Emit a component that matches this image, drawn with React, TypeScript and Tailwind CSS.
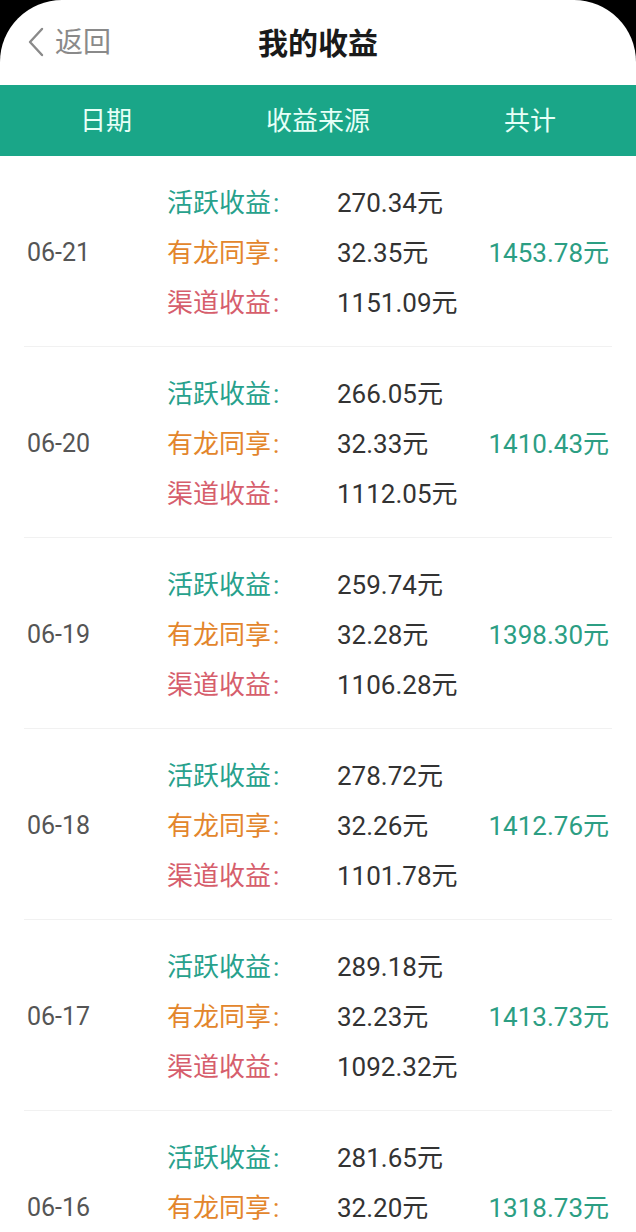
import React from "react";

type Row = { date: string; a: string; b: string; c?: string; total: string };

const rows: Row[] = [
  { date: "06-21", a: "270.34元", b: "32.35元", c: "1151.09元", total: "1453.78元" },
  { date: "06-20", a: "266.05元", b: "32.33元", c: "1112.05元", total: "1410.43元" },
  { date: "06-19", a: "259.74元", b: "32.28元", c: "1106.28元", total: "1398.30元" },
  { date: "06-18", a: "278.72元", b: "32.26元", c: "1101.78元", total: "1412.76元" },
  { date: "06-17", a: "289.18元", b: "32.23元", c: "1092.32元", total: "1413.73元" },
  { date: "06-16", a: "281.65元", b: "32.20元", total: "1318.73元" },
];

const font = { fontFamily: '"Roboto", "Noto Sans CJK SC", sans-serif' };

export default function App() {
  return (
    <div className="w-[636px] h-[1232px] bg-black overflow-hidden" style={font}>
      <div className="w-full h-full bg-white rounded-t-[62px] overflow-hidden flex flex-col">
        {/* Top bar */}
        <div className="relative h-[85px] flex items-center justify-center shrink-0">
          <div className="absolute left-[26px] top-0 h-[85px] flex items-center text-[#8a8a8a]">
            <svg width="20" height="30" viewBox="0 0 20 30" className="mr-[9px] mt-[-1px]">
              <path d="M16 2 L4 15 L16 28" fill="none" stroke="#8a8a8a" strokeWidth="2.4" strokeLinecap="round" strokeLinejoin="round" />
            </svg>
            <span className="text-[28px] leading-none">返回</span>
          </div>
          <span className="text-[30px] font-bold text-[#1a1a1a] leading-none mt-[3px]">我的收益</span>
        </div>
        {/* Green header */}
        <div className="h-[71px] bg-[#1aa688] shrink-0 grid grid-cols-[212px_212px_212px] items-center text-[26px] text-[#e6fff7]">
          <span className="text-center mt-[2px]">日期</span>
          <span className="text-center mt-[2px]">收益来源</span>
          <span className="text-center mt-[2px]">共计</span>
        </div>
        {/* Rows */}
        <div className="flex flex-col">
          {rows.map((r) => (
            <div key={r.date} className="mx-[24px] h-[191px] shrink-0 border-b border-[#f1f1f1] flex items-center pt-[4px]">
              <div className="w-[143px] pl-[3px] text-[25px] text-[#555555]">{r.date}</div>
              <div className="flex flex-col">
                <div className="h-[50px] flex items-center">
                  <span className="w-[170px] text-[26px] text-[#27a18c]">活跃收益<span className="ml-[2px]">:</span></span>
                  <span className="text-[26px] text-[#333333]">{r.a}</span>
                </div>
                <div className="h-[50px] flex items-center">
                  <span className="w-[170px] text-[26px] text-[#e3862c]">有龙同享<span className="ml-[2px]">:</span></span>
                  <span className="text-[26px] text-[#333333]">{r.b}</span>
                </div>
                <div className="h-[50px] flex items-center">
                  {r.c ? (
                    <>
                      <span className="w-[170px] text-[26px] text-[#d65e6c]">渠道收益<span className="ml-[2px]">:</span></span>
                      <span className="text-[26px] text-[#333333]">{r.c}</span>
                    </>
                  ) : null}
                </div>
              </div>
              <div className="flex-1 text-right pr-[3px] text-[26px] text-[#2c9e83]">{r.total}</div>
            </div>
          ))}
        </div>
      </div>
    </div>
  );
}
